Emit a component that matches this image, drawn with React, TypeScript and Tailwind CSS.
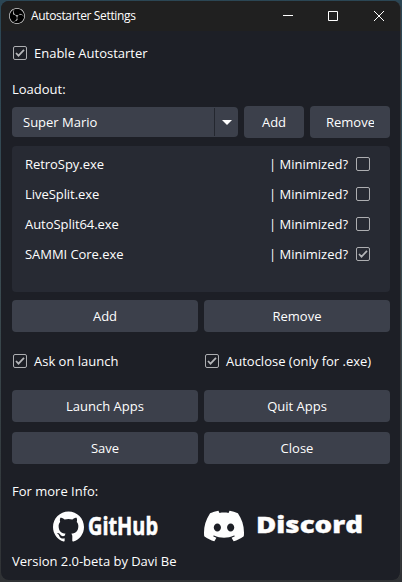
import React from "react";
import { SiObsstudio, SiGithub, SiDiscord } from "react-icons/si";

function Check({ checked = false }: { checked?: boolean }) {
  return (
    <span role="checkbox" aria-checked={checked} className="block size-[14px] shrink-0 rounded-[2px] border border-[#adaeb1]">
      {checked && (
        <svg viewBox="0 0 12 12" className="block size-3" fill="none" stroke="#b5b6b9" strokeWidth="1.7">
          <path d="M2 6 4.5 8.7 10 2.8" />
        </svg>
      )}
    </span>
  );
}

function Button({ children, className = "" }: { children: React.ReactNode; className?: string }) {
  return (
    <button className={`flex h-8 items-center justify-center rounded-[4px] bg-[#3c404b] ${className}`}>
      {children}
    </button>
  );
}

const apps = [
  { name: "RetroSpy.exe", minimized: false },
  { name: "LiveSplit.exe", minimized: false },
  { name: "AutoSplit64.exe", minimized: false },
  { name: "SAMMI Core.exe", minimized: true },
];

export default function App() {
  return (
    <div className="h-[582px] w-[402px] bg-linear-to-b from-[#2b4654] via-[#3a4a50] to-[#303235] pt-px pb-[2px] pl-px">
      <main className="flex h-full w-[400px] flex-col overflow-hidden rounded-[8px] border-r border-[#37383a] bg-[#1d1f26] font-['Open_Sans','Noto_Sans',sans-serif] text-[13px] leading-5 text-[#fefefe]">
        <header className="flex h-[30px] shrink-0 items-center bg-[#202020] pl-2">
          <span className="flex size-4 items-center justify-center rounded-full bg-black">
            <SiObsstudio className="size-4 text-[#d8d8d8]" />
          </span>
          <h1 className="ml-1.5 text-[12px] tracking-[-0.35px]">Autostarter Settings</h1>
          <svg className="ml-auto mr-4 h-3 w-[102px] overflow-visible" viewBox="0 0 102 12" fill="none" stroke="#fff">
            <path d="M1 5.5h10M46.5 1.5h9v9h-9zM92 1l10 10M102 1l-10 10" />
          </svg>
        </header>
        <div className="flex grow flex-col pr-[10px] pl-[11px]">
          <label className="mt-3 flex h-5 items-center gap-[7px] pl-px"><Check checked /> Enable Autostarter</label>
          <div className="mt-4 h-[27px]">Loadout:</div>
          <div className="flex h-8 items-center gap-1.5">
            <div className="flex h-[30px] w-[226px] items-center rounded-[4px] bg-[#3c404b] pl-[11px]">
              Super Mario
              <span className="ml-auto flex h-7 w-6 items-center justify-center border-l border-[#24272f]">
                <span className="border-x-[5px] border-t-[5px] border-x-transparent border-t-white" />
              </span>
            </div>
            <Button className="w-[60px]">Add</Button>
            <Button className="w-20"><span className="w-12 overflow-hidden whitespace-nowrap text-left">Remove</span></Button>
          </div>
          <div className="mt-2 h-[146px] rounded-[4px] bg-[#272a33] py-[3px] pr-5 pl-[13px]">
            {apps.map((app) => (
              <div key={app.name} className="flex h-[30px] items-center">
                <span className="grow tracking-[-0.05px]">{app.name}</span>
                <span className="mr-2">| Minimized?</span>
                <Check checked={app.minimized} />
              </div>
            ))}
          </div>
          <div className="mt-2 grid grid-cols-2 gap-1.5"><Button>Add</Button><Button>Remove</Button></div>
          <div className="mt-[19px] grid h-5 grid-cols-2 gap-1.5">
            <label className="flex items-center gap-[7px] pl-px"><Check checked /> Ask on launch</label>
            <label className="flex items-center gap-[7px] pl-px"><Check checked /> Autoclose (only for .exe)</label>
          </div>
          <div className="mt-[19px] grid grid-cols-2 gap-x-1.5 gap-y-[10px]">
            <Button>Launch Apps</Button><Button>Quit Apps</Button><Button>Save</Button><Button>Close</Button>
          </div>
          <div className="mt-[17px] h-5">For more Info:</div>
          <div className="mt-[10px] grid h-[30px] grid-cols-2 grid-rows-[30px] gap-1.5">
            <div className="flex items-center pl-[41px]">
              <SiGithub className="size-[31px]" />
              <svg className="ml-1 h-[30px] w-[72px] overflow-visible" fill="currentColor"><text x="0" y="24" textLength="70" lengthAdjust="spacingAndGlyphs" stroke="currentColor" strokeWidth="0.6" className="text-[25px] font-bold">GitHub</text></svg>
            </div>
            <div className="flex items-center">
              <SiDiscord className="size-10" />
              <svg className="ml-3 h-[30px] w-[108px] overflow-visible" fill="currentColor"><text x="0" y="22" textLength="107" lengthAdjust="spacingAndGlyphs" stroke="currentColor" strokeWidth="0.3" className="text-[22px] font-extrabold">Discord</text></svg>
            </div>
          </div>
          <div className="mt-[10px] h-5 tracking-[-0.03px]">Version 2.0-beta by Davi Be</div>
        </div>
      </main>
    </div>
  );
}
